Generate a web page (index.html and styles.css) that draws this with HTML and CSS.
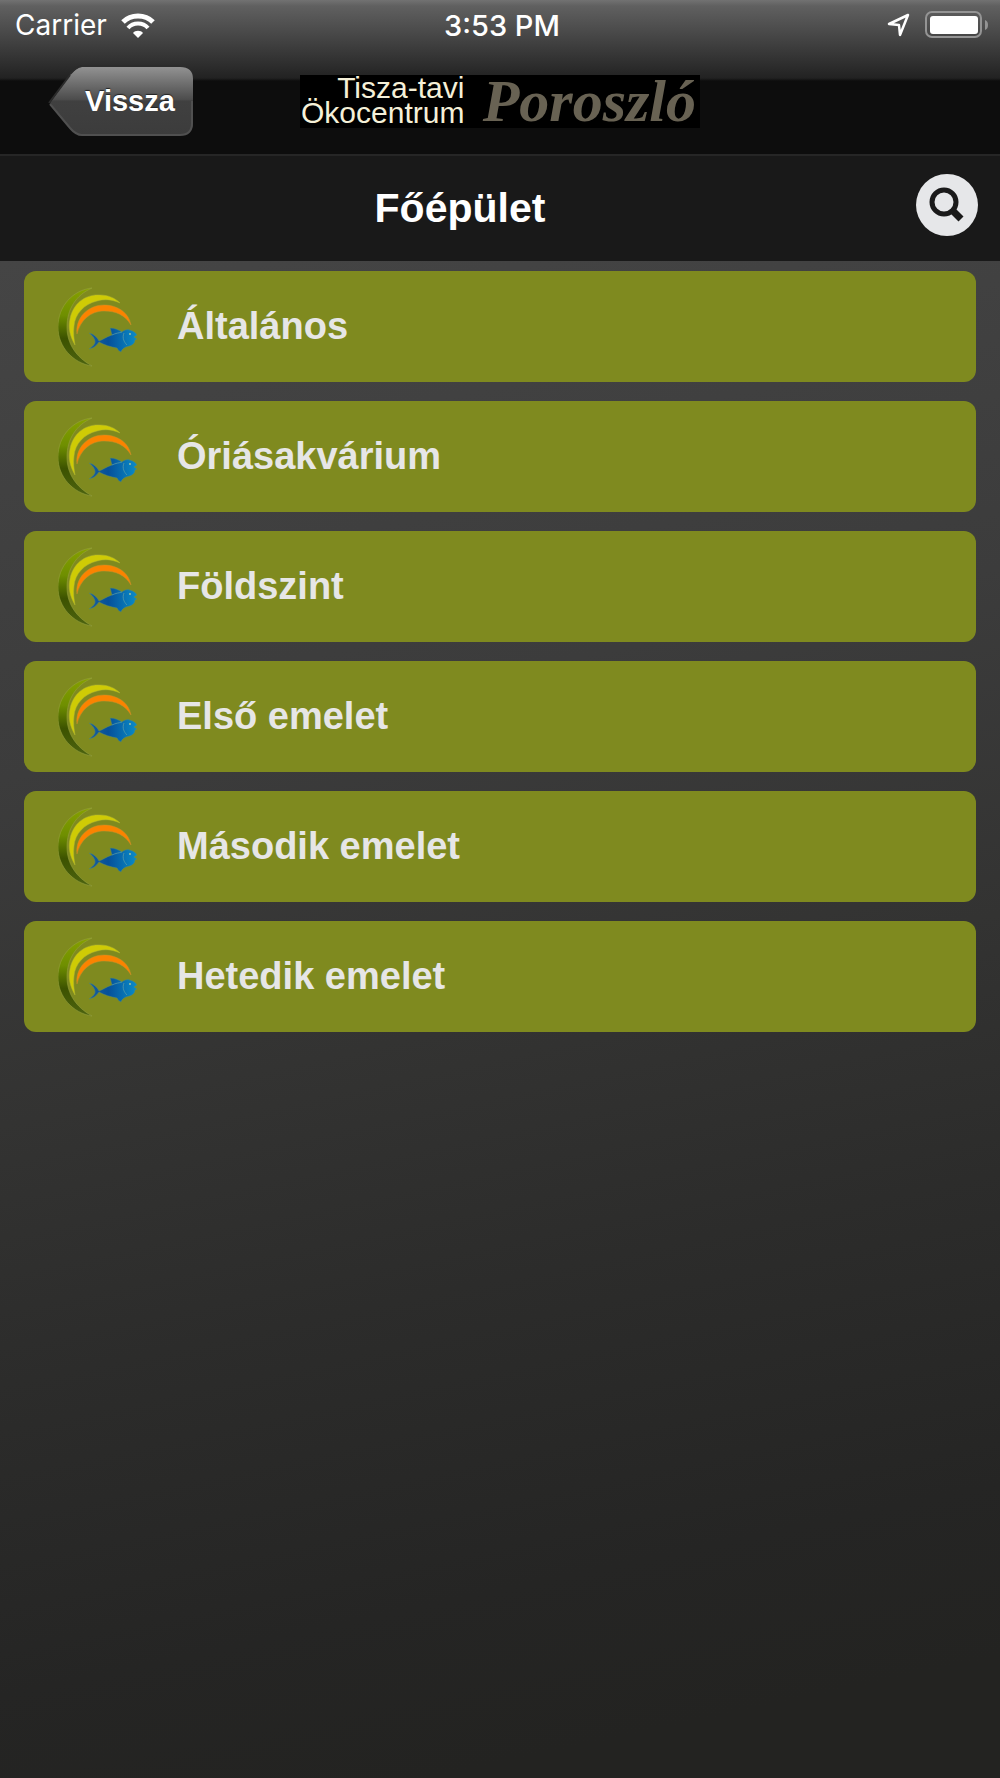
FILE: index.html
```html
<!DOCTYPE html>
<html lang="hu">

<head>
    <meta charset="UTF-8">
    <meta name="viewport" content="width=device-width, initial-scale=1.0">
    <title>Főépület - Tisza-tavi Ökocentrum</title>
    <link rel="stylesheet" href="styles.css">
</head>

<body>
    <!-- shared fish logo, used by every menu row -->
    <svg class="sprite" aria-hidden="true">
        <defs>
            <linearGradient id="grad-leaf" x1="0" y1="0" x2="0" y2="1">
                <stop offset="0" stop-color="#86a000" />
                <stop offset="0.35" stop-color="#6f8f00" />
                <stop offset="0.65" stop-color="#3c5200" />
                <stop offset="1" stop-color="#4d6410" />
            </linearGradient>
            <linearGradient id="grad-fish" x1="0" y1="0" x2="1" y2="0">
                <stop offset="0" stop-color="#1b5f9c" />
                <stop offset="0.4" stop-color="#05509a" />
                <stop offset="1" stop-color="#0a8cc8" />
            </linearGradient>
        </defs>
        <symbol id="logo-fish" viewBox="0 0 80 80">
            <path fill="url(#grad-leaf)" stroke="#9aa544" stroke-width="0.5" d="M34 1C15 3 0 19 0 40C0 60 15 76 34 79C18 70 9 57 9 40C9 22 18 8 34 1Z" />
            <path fill="#cfcb05" stroke="#b3b632" stroke-width="0.5" d="M17 58C12 49 10 41 12 32C15 16 28 7 42 8C50 8 57 11 62 16C53 12 46 12 39 14C26 17 17 27 16 39C15 46 16 52 17 58Z" />
            <path fill="#fb8300" stroke="#c8912c" stroke-width="0.5" d="M19 47C17 31 30 18 46 18C60 18 71 26 73 38C67 28 58 24 46 24C32 24 22 34 19 47Z" />
            <path fill="url(#grad-fish)" stroke="#5b8a6a" stroke-width="0.5" d="M31 46C36 47 39 50 41 54C44 53 48 50 54 48C53 45 53 43 52 41C57 41 61 43 64 45C66 43 69 42 72 43C76 44 78 46 79 48L76 50L79 52L77 53C77 57 73 59 68 60C66 61 64 62 63 65C61 64 60 63 59 61C53 60 46 58 41 55C38 59 36 61 31 62C35 59 37 57 37 55C37 52 35 49 31 46Z" />
            <path fill="none" stroke="#5fa0a8" stroke-width="0.7" d="M54 48C58 46 61 46 64 45M66 46C64 51 66 55 69 58" />
            <circle cx="72" cy="47" r="0.9" fill="#a9c9a0" />
        </symbol>
    </svg>

    <header class="header">
        <div class="status-bar">
            <div class="status-left">
                <span>Carrier</span>
                <svg class="wifi" viewBox="0 0 34 25" aria-hidden="true">
                    <path fill="#fff" d="M17 25L12 20C14 17 20 17 22 20Z" />
                    <path fill="none" stroke="#fff" stroke-width="4" d="M7 15C12 9 22 9 27 15" />
                    <path fill="none" stroke="#fff" stroke-width="5" d="M2 9C10 1 24 1 32 9" />
                </svg>
            </div>
            <span class="status-time">3:53 PM</span>
            <div class="status-right">
                <svg class="location" viewBox="0 0 24 24" aria-hidden="true">
                    <path fill="none" stroke="#fff" stroke-width="2.5" stroke-linejoin="round" d="M21 2L2 11L12 12L13 22Z" />
                </svg>
                <svg class="battery" viewBox="0 0 64 28" aria-hidden="true">
                    <rect x="1" y="1" width="55" height="25" rx="6" fill="none" stroke="#949494" stroke-width="2" />
                    <rect x="5" y="5" width="48" height="18" rx="3" fill="#fff" />
                    <path fill="#949494" d="M60 9C64 10 64 18 60 19Z" />
                </svg>
            </div>
        </div>
        <nav class="nav-bar">
            <button type="button" class="back-button">
                <svg class="back-shape" viewBox="0 0 146 72" aria-hidden="true">
                    <defs>
                        <linearGradient id="grad-back" x1="0" y1="0" x2="0" y2="1">
                            <stop offset="0" stop-color="#929292" />
                            <stop offset="0.48" stop-color="#4c4c4c" />
                            <stop offset="0.5" stop-color="#404040" />
                            <stop offset="1" stop-color="#3c3c3c" />
                        </linearGradient>
                    </defs>
                    <path fill="url(#grad-back)" d="M2 38L22 10Q29 2 34 2H132Q145 2 145 14V58Q145 70 132 70H34Q28 70 22 63Z" />
                    <path fill="none" stroke="#2b2b2b" stroke-width="2" d="M22 9Q29 1 34 1H132M1 38L22 10" />
                    <path fill="none" stroke="#505050" stroke-width="2" d="M2 39L22 63Q28 70 34 70H132Q144 70 144 58V36" />
                </svg>
                <span class="back-label">Vissza</span>
            </button>
            <div class="brand">
                <div class="brand-name">Tisza-tavi<br>Ökocentrum</div>
                <div class="brand-place">Poroszló</div>
            </div>
        </nav>
    </header>

    <div class="title-bar">
        <h1>Főépület</h1>
        <button type="button" class="search-button" aria-label="Keresés">
            <svg viewBox="0 0 62 62" aria-hidden="true">
                <circle cx="28" cy="28" r="12" fill="none" stroke="#1a1a1a" stroke-width="5" />
                <path fill="none" stroke="#1a1a1a" stroke-width="7" d="M36 36L45 45" />
            </svg>
        </button>
    </div>

    <main class="menu">
        <a class="menu-item" href="#altalanos">
            <svg class="menu-icon" aria-hidden="true"><use href="#logo-fish" /></svg>
            <span>Általános</span>
        </a>
        <a class="menu-item" href="#oriasakvarium">
            <svg class="menu-icon" aria-hidden="true"><use href="#logo-fish" /></svg>
            <span>Óriásakvárium</span>
        </a>
        <a class="menu-item" href="#foldszint">
            <svg class="menu-icon" aria-hidden="true"><use href="#logo-fish" /></svg>
            <span>Földszint</span>
        </a>
        <a class="menu-item" href="#elso-emelet">
            <svg class="menu-icon" aria-hidden="true"><use href="#logo-fish" /></svg>
            <span>Első emelet</span>
        </a>
        <a class="menu-item" href="#masodik-emelet">
            <svg class="menu-icon" aria-hidden="true"><use href="#logo-fish" /></svg>
            <span>Második emelet</span>
        </a>
        <a class="menu-item" href="#hetedik-emelet">
            <svg class="menu-icon" aria-hidden="true"><use href="#logo-fish" /></svg>
            <span>Hetedik emelet</span>
        </a>
    </main>
</body>

</html>
```

FILE: styles.css
```css
* {
    box-sizing: border-box;
}

body {
    display: flex;
    flex-direction: column;
    min-height: 100vh;
    margin: 0;
    font-family: "Liberation Sans", Arial, sans-serif;
    color: #ffffff;
    background-color: #232321;
}

button {
    padding: 0;
    border: none;
    background: none;
    color: inherit;
    font-family: inherit;
    cursor: pointer;
}

.sprite {
    position: absolute;
    width: 0;
    height: 0;
}

.header {
    background: linear-gradient(#727272 0, #606060 6px, #222222 78px, #0d0d0d 81px, #0d0d0d 100%);
}

/* status bar */
.status-bar {
    display: grid;
    grid-template-columns: 1fr auto 1fr;
    align-items: center;
    height: 50px;
    padding: 0 11px 0 15px;
    font-family: Inter, sans-serif;
    font-size: 28px;
}

.status-left,
.status-right {
    display: flex;
    align-items: center;
}

.status-left {
    gap: 14px;
}

.status-right {
    justify-content: flex-end;
    gap: 14px;
}

.status-time {
    font-size: 29px;
    font-weight: 500;
}

.wifi {
    width: 34px;
    height: 25px;
}

.location {
    width: 24px;
    height: 24px;
}

.battery {
    width: 64px;
    height: 28px;
}

/* back button and brand */
.nav-bar {
    display: grid;
    grid-template-columns: 1fr auto 1fr;
    align-items: center;
    height: 104px;
    padding: 0 48px 2px;
}

.back-button {
    display: grid;
    justify-self: start;
    align-items: center;
    font-size: 29px;
    font-weight: bold;
}

.back-shape,
.back-label {
    grid-area: 1 / 1;
}

.back-shape {
    width: 146px;
    height: 72px;
}

.back-label {
    padding-left: 18px;
    text-shadow: 0 -1px 1px #222222;
}

.brand {
    display: flex;
    justify-content: space-between;
    width: 400px;
    height: 53px;
    padding: 0 4px 0 1px;
    background-color: #000000;
}

.brand-name {
    color: #f5f0d8;
    font-size: 30px;
    line-height: 25px;
    text-align: right;
}

.brand-place {
    color: #686253;
    font-family: "Liberation Serif", serif;
    font-size: 60px;
    font-style: italic;
    font-weight: bold;
    line-height: 53px;
}

/* page title */
.title-bar {
    display: grid;
    grid-template-columns: 1fr auto;
    gap: 14px;
    align-items: center;
    height: 107px;
    padding: 0 22px 0 18px;
    border-top: 2px solid #262626;
    background-color: #191919;
}

.title-bar h1 {
    margin: 0;
    font-size: 41px;
    text-align: center;
}

.search-button {
    width: 62px;
    height: 62px;
    margin-bottom: 8px;
    border-radius: 50%;
    background-color: #e6e7e9;
}

/* menu */
.menu {
    display: flex;
    flex: 1;
    flex-direction: column;
    gap: 19px;
    padding: 10px 24px;
    background: linear-gradient(168deg, #454545, #3c3c3c 30%, #333332 50%, #2c2c2b 65%, #252524 83%, #232321 93%);
}

.menu-item {
    display: flex;
    align-items: center;
    gap: 39px;
    height: 111px;
    padding: 0 34px;
    border-radius: 12px;
    background-color: #7f8a1f;
    color: #e6e6e6;
    font-size: 38px;
    font-weight: bold;
    text-decoration: none;
}

.menu-icon {
    width: 80px;
    height: 80px;
}
```
